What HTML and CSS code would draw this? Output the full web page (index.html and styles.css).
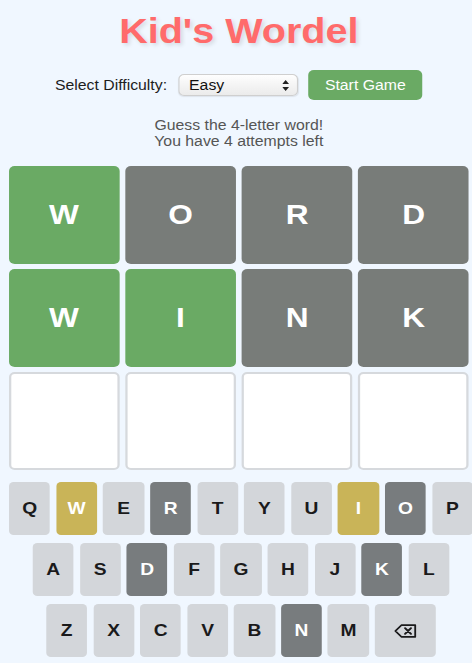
FILE: index.html
```html
<!DOCTYPE html>
<html lang="en">
<head>
<meta charset="utf-8">
<title>Kid's Wordel</title>
<link rel="stylesheet" href="styles.css">
</head>
<body>
<div class="app">
  <h1 class="title">Kid's Wordel</h1>

  <div class="controls">
    <span class="label">Select Difficulty:</span>
    <div class="select">
      <span>Easy</span>
      <svg class="select-arrows" width="6" height="11" viewBox="0 0 6 11"><path d="M3 0 L6 4 H0 Z M3 11 L6 7 H0 Z" fill="#222"/></svg>
    </div>
    <button class="start">Start Game</button>
  </div>

  <div class="message">
    <div>Guess the 4-letter word!</div>
    <div>You have 4 attempts left</div>
  </div>

  <div class="board">
    <div class="tile correct">W</div>
    <div class="tile absent">O</div>
    <div class="tile absent">R</div>
    <div class="tile absent">D</div>
    <div class="tile correct">W</div>
    <div class="tile correct">I</div>
    <div class="tile absent">N</div>
    <div class="tile absent">K</div>
    <div class="tile empty"></div>
    <div class="tile empty"></div>
    <div class="tile empty"></div>
    <div class="tile empty"></div>
  </div>

  <div class="keyboard">
    <div class="krow">
      <div class="key">Q</div>
      <div class="key present">W</div>
      <div class="key">E</div>
      <div class="key dark">R</div>
      <div class="key">T</div>
      <div class="key">Y</div>
      <div class="key">U</div>
      <div class="key present">I</div>
      <div class="key dark">O</div>
      <div class="key">P</div>
    </div>
    <div class="krow">
      <div class="key">A</div>
      <div class="key">S</div>
      <div class="key dark">D</div>
      <div class="key">F</div>
      <div class="key">G</div>
      <div class="key">H</div>
      <div class="key">J</div>
      <div class="key dark">K</div>
      <div class="key">L</div>
    </div>
    <div class="krow">
      <div class="key">Z</div>
      <div class="key">X</div>
      <div class="key">C</div>
      <div class="key">V</div>
      <div class="key">B</div>
      <div class="key dark">N</div>
      <div class="key">M</div>
      <div class="key wide">
        <svg width="20" height="14" viewBox="0 0 20 14"><path d="M6.5 1.2 H18.8 V12.8 H6.5 L1.2 7 Z" fill="none" stroke="#1a1a1b" stroke-width="1.7" stroke-linejoin="round"/><path d="M9.8 4.2 L15 9.8 M15 4.2 L9.8 9.8" stroke="#1a1a1b" stroke-width="1.8" stroke-linecap="round"/></svg>
      </div>
    </div>
  </div>
</div>
</body>
</html>
```

FILE: styles.css
```css
html, body {
  margin: 0;
  padding: 0;
}

body {
  background: #f0f7ff;
  font-family: "Liberation Sans", Arial, Helvetica, sans-serif;
  overflow: hidden;
  width: 472px;
  height: 663px;
}

.app {
  width: 423px;
  transform: scaleX(1.129);
  transform-origin: 0 0;
  text-align: center;
}

.title {
  margin: 0;
  padding-top: 11px;
  font-size: 35px;
  line-height: 40px;
  font-weight: bold;
  color: #ff6b6b;
  text-shadow: 2px 2px 4px rgba(0, 0, 0, 0.12);
}

.controls {
  margin-top: 19px;
  display: flex;
  justify-content: center;
  align-items: center;
  height: 30px;
}

.label {
  font-size: 14px;
  color: #1d1d1d;
  margin-right: 10.5px;
}

.select {
  box-sizing: border-box;
  width: 105.5px;
  height: 22px;
  padding: 0 7px 0 8px;
  display: flex;
  align-items: center;
  justify-content: space-between;
  font-size: 14px;
  color: #111;
  border: 1px solid #cfcfcf;
  border-radius: 5px;
  background: linear-gradient(#fefefe, #ebebeb);
  box-shadow: 0 1px 1px rgba(0, 0, 0, 0.08);
  margin-right: 8.8px;
}

.start {
  height: 30px;
  padding: 0 15px;
  border: none;
  border-radius: 5px;
  background: #6aaa64;
  color: #fff;
  font-family: inherit;
  font-size: 14px;
}

.message {
  margin-top: 18px;
  font-size: 14px;
  line-height: 15.5px;
  color: #555;
}

.board {
  margin-top: 17px;
  display: grid;
  grid-template-columns: repeat(4, 98px);
  grid-auto-rows: 98px;
  column-gap: 5.3px;
  row-gap: 5px;
  justify-content: center;
}

.tile {
  box-sizing: border-box;
  border-radius: 5px;
  display: flex;
  align-items: center;
  justify-content: center;
  font-size: 28px;
  font-weight: bold;
  color: #fff;
}

.tile.correct {
  background: #6aaa64;
}

.tile.absent {
  background: #787c79;
}

.tile.empty {
  background: #fff;
  border: 2px solid #d6d9dd;
}

.keyboard {
  margin-top: 12px;
  padding-left: 4px;
  display: flex;
  flex-direction: column;
  gap: 8px;
}

.krow {
  display: flex;
  justify-content: center;
  gap: 5.3px;
}

.key {
  width: 36.3px;
  height: 53px;
  flex: none;
  border-radius: 4px;
  background: #d3d6da;
  color: #1a1a1b;
  font-size: 17px;
  font-weight: bold;
  display: flex;
  align-items: center;
  justify-content: center;
}

.key.dark {
  background: #787c7e;
  color: #fff;
}

.key.present {
  background: #c9b458;
  color: #fff;
}

.key.wide {
  width: 54px;
}
```
